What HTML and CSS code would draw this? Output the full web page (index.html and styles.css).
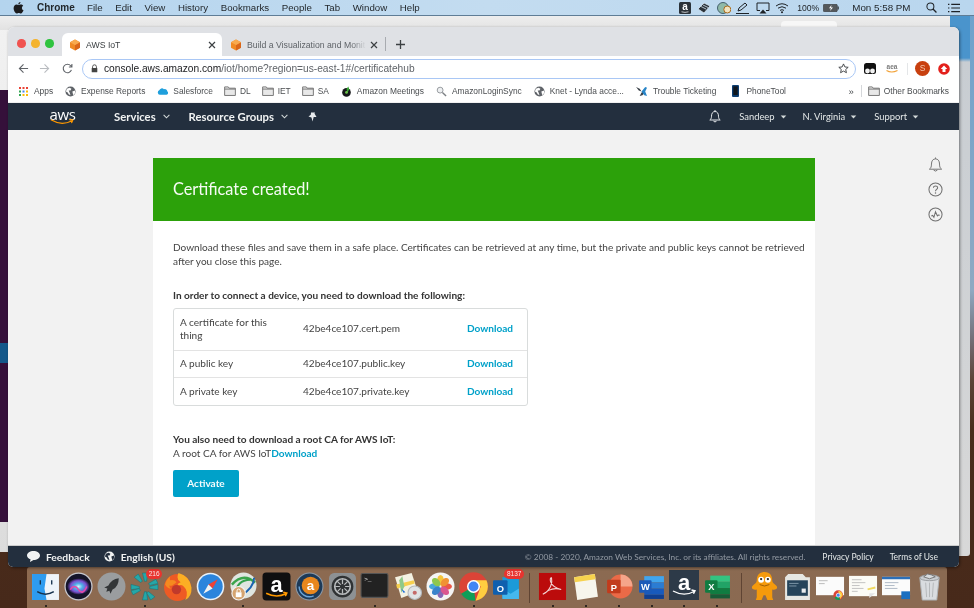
FILE: index.html
```html
<!DOCTYPE html>
<html lang="en">
<head>
<meta charset="utf-8">
<title>AWS IoT</title>
<link rel="stylesheet" href="styles.css">
</head>
<body>
<svg class="defs" width="0" height="0" aria-hidden="true">
  <symbol id="globe" viewBox="0 0 12 12"><circle cx="6" cy="6" r="5.5" fill="#5f6368"/><path d="M2 3l3-1 2 1-1 2-2 0 1 2 1 3-2-1-1-2-2-1zM8 6l3-1 0 3-2 2z" fill="#fff"/></symbol>
  <symbol id="folder" viewBox="0 0 13 11"><path d="M.6 10.4V1h4l1 1.4h6.8v8z" fill="#e8e8e8" stroke="#6e6e6e" stroke-width="1"/><path d="M.6 3.4h11.8" stroke="#6e6e6e"/></symbol>
  <symbol id="caret" viewBox="0 0 8 5"><path d="M.5.5h7L4 4.5z" fill="currentColor"/></symbol>
  <symbol id="closex" viewBox="0 0 8 8"><path d="M1 1l6 6M7 1L1 7" stroke="#3c4043" stroke-width="1.200"/></symbol>
</svg>

<div class="desktop">
  <header class="menubar">
    <svg class="apple" viewBox="0 0 12 14"><path d="M8.3 0c.1 1.300-1 2.800-2.500 2.800C5.600 1.500 6.900.2 8.300 0zM6 3.600c.7 0 1.500-.7 2.900-.7 1 0 2 .5 2.600 1.400-2.200 1.300-1.900 4.400.4 5.300-.6 1.500-1.800 3.800-3.200 3.800-.9 0-1.300-.6-2.400-.6s-1.500.6-2.400.6C2.200 13.400.3 10 .3 7.400c0-2.700 1.700-4.400 3.400-4.400 1 0 1.700.6 2.300.6z" fill="#1c1c1e"/></svg>
    <b class="m-app">Chrome</b>
    <span class="m-item">File</span><span class="m-item">Edit</span><span class="m-item">View</span><span class="m-item">History</span><span class="m-item">Bookmarks</span><span class="m-item">People</span><span class="m-item">Tab</span><span class="m-item">Window</span><span class="m-item">Help</span>
    <span class="m-fill"></span>
    <svg class="tray" viewBox="0 0 14 14"><rect x="1" y="1" width="12" height="12" rx="1.500" fill="#2a3138"/><text x="7" y="9.300" class="tray-a">a</text><path d="M3.500 10.800q3.500 1.200 7 0" stroke="#fff" stroke-width=".7" fill="none"/></svg>
    <svg class="tray" viewBox="0 0 14 14"><path d="M1 8l6-6 6 3-6 7zM4 5.500l5 2.500M6 4l5 2.500" fill="#2a3138" stroke="#d5e6f3" stroke-width=".8"/></svg>
    <svg class="tray" viewBox="0 0 14 14"><circle cx="6" cy="7" r="5.500" fill="#8fb9a8" stroke="#44606e"/><circle cx="10.300" cy="8.500" r="3.500" fill="#f3e3c0" stroke="#a86a1a"/></svg>
    <svg class="tray" viewBox="0 0 14 14"><path d="M2 10l1-3 6-5 2 2-6 5zM0 12.500h13" fill="none" stroke="#1e2226" stroke-width="1"/></svg>
    <svg class="tray" viewBox="0 0 14 14"><path d="M4 9.500H1V2h12v7.500h-3" fill="none" stroke="#1e2226"/><path d="M3.500 12.500L7 8.500l3.500 4z" fill="#1e2226"/></svg>
    <svg class="tray" viewBox="0 0 14 14"><path d="M1 5q6-4.500 12 0M3 7.200q4-3 8 0M5 9.400q2-1.400 4 0" fill="none" stroke="#1e2226"/><circle cx="7" cy="11.300" r="1" fill="#1e2226"/></svg>
    <span class="m-pct">100%</span>
    <svg class="battery" viewBox="0 0 16 8"><rect x=".3" y=".3" width="14" height="7.400" rx="1.200" fill="#55595c" stroke="#33373a" stroke-width=".6"/><rect x="14.600" y="2.500" width="1.200" height="3" fill="#33373a"/><path d="M8.500 1L6 4.300h2L7 7l3-3.500H8z" fill="#fff"/></svg>
    <span class="m-clock">Mon 5:58 PM</span>
    <svg class="m-search" viewBox="0 0 12 12"><circle cx="4.800" cy="4.800" r="3.800" fill="none" stroke="#1e2226" stroke-width="1.100"/><path d="M7.600 7.600l3.800 3.800" stroke="#1e2226" stroke-width="1.400"/></svg>
    <svg class="m-list" viewBox="0 0 13 10"><path d="M0 1h1.500M0 5h1.500M0 9h1.500M3.500 1H13M3.500 5H13M3.500 9H13" stroke="#1e2226" stroke-width="1.300"/></svg>
  </header>

  <div class="wall-left"><div class="wall-left-dark"><div class="wall-left-blue"></div></div></div>
  <div class="back-window"><i class="back-tab"></i></div>
  <div class="back-window-2"></div>

  <main class="window">
    <div class="tabstrip">
      <div class="lights"><i class="light red"></i><i class="light yellow"></i><i class="light green"></i></div>
      <div class="tab tab-active">
        <svg class="cube" viewBox="0 0 12 12"><path d="M6 .5l5 2.700v5.600l-5 2.700-5-2.700V3.200z" fill="#f08a24"/><path d="M6 6l5-2.800v5.600l-5 2.700z" fill="#d9661a"/><path d="M6 .5l5 2.700L6 6 1 3.200z" fill="#f8a94e"/></svg>
        <span class="tab-title">AWS IoT</span>
        <svg class="tab-x"><use href="#closex"/></svg>
      </div>
      <div class="tab tab-idle">
        <svg class="cube" viewBox="0 0 12 12"><path d="M6 .5l5 2.700v5.600l-5 2.700-5-2.700V3.200z" fill="#f08a24"/><path d="M6 6l5-2.800v5.600l-5 2.700z" fill="#d9661a"/><path d="M6 .5l5 2.700L6 6 1 3.200z" fill="#f8a94e"/></svg>
        <span class="tab-title fade">Build a Visualization and Monit</span>
        <svg class="tab-x"><use href="#closex"/></svg>
      </div>
      <i class="tab-sep"></i>
      <svg class="tab-plus" viewBox="0 0 9 9"><path d="M4.500 0v9M0 4.500h9" stroke="#3c4043" stroke-width="1.300"/></svg>
    </div>

    <div class="toolbar">
      <svg class="tb-icon" viewBox="0 0 12 12"><path d="M11 6H1.500M6 1.500L1.500 6 6 10.500" fill="none" stroke="#5f6368" stroke-width="1.200"/></svg>
      <svg class="tb-icon" viewBox="0 0 12 12"><path d="M1 6h9.500M6 1.500L10.500 6 6 10.500" fill="none" stroke="#b9bcc0" stroke-width="1.200"/></svg>
      <svg class="tb-icon tb-reload" viewBox="0 0 12 12"><path d="M10.300 7.500A4.600 4.600 0 1 1 9.500 3L10.800 4.300M10.800 1v3.300H7.500" fill="none" stroke="#5f6368" stroke-width="1.200"/></svg>
      <div class="omnibox">
        <svg class="lock" viewBox="0 0 8 10"><path d="M1.800 4.500V3a2.200 2.200 0 0 1 4.400 0v1.500" fill="none" stroke="#444" stroke-width="1"/><rect x=".8" y="4.300" width="6.400" height="5" rx=".7" fill="#444"/></svg>
        <span class="url"><span class="url-host">console.aws.amazon.com</span>/iot/home?region=us-east-1#/certificatehub</span>
        <span class="omni-fill"></span>
        <svg class="star" viewBox="0 0 12 12"><path d="M6 1l1.500 3.300 3.600.4-2.700 2.400.8 3.500L6 8.800l-3.200 1.800.8-3.500L.9 4.700l3.600-.4z" fill="none" stroke="#3c4043" stroke-width="1"/></svg>
      </div>
      <svg class="ext ext-tamper" viewBox="0 0 12 12"><rect width="12" height="11" rx="2.500" fill="#111"/><circle cx="3.500" cy="8" r="2.400" fill="#f1f1f1"/><circle cx="8.500" cy="8" r="2.400" fill="#f1f1f1"/></svg>
      <span class="ext ext-aws"><span class="ext-aws-t">aea</span><svg class="ext-aws-s" viewBox="0 0 12 3"><path d="M.5.500q5 3 11 0" fill="none" stroke="#f2a33a" stroke-width="1.100"/></svg></span>
      <i class="ext-sep"></i>
      <span class="avatar">S</span>
      <svg class="ext-red" viewBox="0 0 12 12"><circle cx="6" cy="6" r="5.800" fill="#e3201b"/><path d="M6 2.500L9.300 6H7.500v3h-3V6H2.700z" fill="#fff"/></svg>
    </div>

    <nav class="bookmarks">
      <span class="bm bm-apps"><svg class="bm-grid" viewBox="0 0 9 9"><g><rect width="2" height="2" fill="#e94235"/><rect x="3.500" width="2" height="2" fill="#e94235"/><rect x="7" width="2" height="2" fill="#e94235"/><rect y="3.500" width="2" height="2" fill="#34a853"/><rect x="3.500" y="3.500" width="2" height="2" fill="#4285f4"/><rect x="7" y="3.500" width="2" height="2" fill="#fbbc05"/><rect y="7" width="2" height="2" fill="#34a853"/><rect x="3.500" y="7" width="2" height="2" fill="#fbbc05"/><rect x="7" y="7" width="2" height="2" fill="#fbbc05"/></g></svg>Apps</span>
      <span class="bm bm-exp"><svg class="bm-ic"><use href="#globe"/></svg>Expense Reports</span>
      <span class="bm bm-sf"><svg class="bm-ic" viewBox="0 0 12 9"><path d="M3 8a2.500 2.500 0 0 1-.5-4.800A3 3 0 0 1 7.500 2a2.700 2.700 0 0 1 3.800 2.500A2 2 0 0 1 9.500 8z" fill="#1f9fdc"/></svg>Salesforce</span>
      <span class="bm bm-f1"><svg class="bm-fold"><use href="#folder"/></svg>DL</span>
      <span class="bm bm-f2"><svg class="bm-fold"><use href="#folder"/></svg>IET</span>
      <span class="bm bm-f3"><svg class="bm-fold"><use href="#folder"/></svg>SA</span>
      <span class="bm bm-am"><svg class="bm-ic" viewBox="0 0 12 12"><circle cx="6" cy="7" r="4.700" fill="#16181a"/><path d="M6 3l2-2.500 1 3-2 4z" fill="#38a534"/><circle cx="6" cy="7" r="1.500" fill="#6ec24a"/></svg>Amazon Meetings</span>
      <span class="bm bm-lo"><svg class="bm-ic" viewBox="0 0 12 12"><circle cx="4.500" cy="4.500" r="3.200" fill="#eef0f2" stroke="#8f9498"/><path d="M7 7l4 4" stroke="#7b7f83" stroke-width="1.500"/></svg>AmazonLoginSync</span>
      <span class="bm bm-kn"><svg class="bm-ic"><use href="#globe"/></svg>Knet - Lynda acce...</span>
      <span class="bm bm-tt"><svg class="bm-ic2" viewBox="0 0 13 12"><path d="M0 1l4 2 2 3-3-1zM4 11l2-4 2-1 1 2-2 2z" fill="#3a4148"/><path d="M6 6l4-5 2 1-2 4 2 5-3-1z" fill="#2a86c8"/></svg>Trouble Ticketing</span>
      <span class="bm bm-pt"><svg class="bm-ph" viewBox="0 0 7 12"><rect width="7" height="12" rx="1" fill="#0d3f73"/><rect x="1.300" y="1.300" width="4.400" height="8.800" fill="#10161c"/></svg>PhoneTool</span>
      <span class="bm-fill"></span>
      <span class="bm-more">»</span>
      <i class="bm-sep"></i>
      <span class="bm bm-other"><svg class="bm-fold"><use href="#folder"/></svg>Other Bookmarks</span>
    </nav>

    <nav class="awsnav">
      <span class="aws-logo"><span class="aws-word">aws</span><svg class="aws-smile" viewBox="0 0 28 7"><path d="M.5 1Q13 8.500 25 2M22 .8l4 .4-1.500 3.600" fill="none" stroke="#f90" stroke-width="1.400"/></svg></span>
      <b class="nav-main nav-services">Services</b><svg class="nav-chev" viewBox="0 0 8 5"><path d="M.7.700L4 4l3.300-3.300" fill="none" stroke="#d5dbdb" stroke-width="1.200"/></svg>
      <b class="nav-main nav-rg">Resource Groups</b><svg class="nav-chev" viewBox="0 0 8 5"><path d="M.7.700L4 4l3.300-3.300" fill="none" stroke="#d5dbdb" stroke-width="1.200"/></svg>
      <svg class="nav-pin" viewBox="0 0 9 10"><path d="M3 .5h4l-.5 1 2 3.500H5.700L4.500 9.500 3.500 5.500 .5 4.500 2.800 2.800z" fill="#e8ebed"/></svg>
      <span class="nav-fill"></span>
      <svg class="nav-bell" viewBox="0 0 12 13"><path d="M.8 10h10.400c-1.200-1-1.700-1.800-1.700-3.800 0-2.800-1.300-4.700-3.500-4.700S2.500 3.400 2.500 6.200c0 2-.5 2.800-1.700 3.800zM4.500 11.200q1.500 1.500 3 0M6 0v1.500" fill="none" stroke="#e8ebed" stroke-width="1"/></svg>
      <span class="nav-sub">Sandeep</span><svg class="nav-caret"><use href="#caret"/></svg>
      <span class="nav-sub nav-s2">N. Virginia</span><svg class="nav-caret"><use href="#caret"/></svg>
      <span class="nav-sub nav-s3">Support</span><svg class="nav-caret"><use href="#caret"/></svg>
    </nav>

    <div class="content">
      <section class="card">
        <h1 class="banner">Certificate created!</h1>
        <div class="card-body">
          <p class="intro">Download these files and save them in a safe place. Certificates can be retrieved at any time, but the private and public keys cannot be retrieved after you close this page.</p>
          <p class="lead">In order to connect a device, you need to download the following:</p>
          <div class="files">
            <div class="file-row file-row-tall"><span class="f-label">A certificate for this thing</span><span class="f-name">42be4ce107.cert.pem</span><a class="dl f-dl">Download</a></div>
            <div class="file-row"><span class="f-label">A public key</span><span class="f-name">42be4ce107.public.key</span><a class="dl f-dl">Download</a></div>
            <div class="file-row"><span class="f-label">A private key</span><span class="f-name">42be4ce107.private.key</span><a class="dl f-dl">Download</a></div>
          </div>
          <p class="lead lead-root">You also need to download a root CA for AWS IoT:</p>
          <p class="root-line">A root CA for AWS IoT<a class="dl">Download</a></p>
          <button class="activate">Activate</button>
        </div>
      </section>
      <aside class="side">
        <svg class="side-ic" viewBox="0 0 16 16"><path d="M1.500 13h13c-1.500-1-2.200-2.500-2.200-5.500C12.300 4 10.500 2 8 2S3.700 4 3.700 7.500c0 3-.7 4.500-2.200 5.500zM6 14q2 2 4 0M8 .5V2" fill="none" stroke="#6f6f6f" stroke-width="1"/></svg>
        <svg class="side-ic" viewBox="0 0 16 16"><circle cx="8" cy="8" r="7" fill="none" stroke="#6f6f6f" stroke-width="1.100"/><path d="M5.800 6.200C5.800 3.500 10.300 3.700 10.300 6.200c0 1.700-2.300 1.700-2.300 3.600" fill="none" stroke="#6f6f6f" stroke-width="1.100"/><circle cx="8" cy="11.700" r=".8" fill="#6f6f6f"/></svg>
        <svg class="side-ic" viewBox="0 0 16 16"><circle cx="8" cy="8" r="7" fill="none" stroke="#6f6f6f" stroke-width="1.100"/><path d="M3.500 9.500l1.500-.5 1.300 2L8 5l2 4.500 1-1 1.500.3" fill="none" stroke="#6f6f6f" stroke-width="1.100"/></svg>
      </aside>
    </div>

    <footer class="footer">
      <svg class="fb-ic" viewBox="0 0 13 11"><path d="M6.500 0C10 0 13 1.900 13 4.500S10 9 6.500 9L3 11l.5-2.700C1.500 7.600 0 6.200 0 4.500 0 1.900 3 0 6.500 0z" fill="#f1f3f3"/></svg>
      <b class="ft-link ft-feedback">Feedback</b>
      <svg class="ft-globe" viewBox="0 0 12 12"><circle cx="6" cy="6" r="5.500" fill="#f1f3f3"/><path d="M2 3l3-1 2 1-1 2-2 0 1 2 1 3-2-1-1-2-2-1zM8 6l3-1 0 3-2 2z" fill="#232f3e"/></svg>
      <b class="ft-link">English (US)</b>
      <span class="ft-fill"></span>
      <span class="ft-copy">© 2008 - 2020, Amazon Web Services, Inc. or its affiliates. All rights reserved.</span>
      <span class="ft-legal ft-privacy">Privacy Policy</span>
      <span class="ft-legal">Terms of Use</span>
    </footer>
  </main>

  <div class="dock">
    <div class="dock-ic"><svg viewBox="0 0 28 28"><rect x="1" y="2" width="26" height="25" fill="#eef4fa"/><path d="M1 2h14l-2 14 2 11H1z" fill="#2d9bf0"/><path d="M9 8v4M20 8v4M6 19q8 5 16 0" fill="none" stroke="#17324d" stroke-width="1.300"/></svg><i class="dot"></i></div>
    <div class="dock-ic"><svg viewBox="0 0 28 28"><defs><radialGradient id="siri"><stop offset="0" stop-color="#d8f2ff"/><stop offset=".35" stop-color="#4fb0e8"/><stop offset=".7" stop-color="#7a4fd0"/><stop offset="1" stop-color="#14142a"/></radialGradient></defs><circle cx="14" cy="14" r="13" fill="#14142a" stroke="#c9c9cf" stroke-width="1.200"/><ellipse cx="14" cy="14" rx="11" ry="8" fill="url(#siri)"/><path d="M6 17q4-6 8 0t8-3" fill="none" stroke="#e84aa8" stroke-width="1.500"/></svg></div>
    <div class="dock-ic"><svg viewBox="0 0 28 28"><circle cx="14" cy="14" r="13.500" fill="#9a9d9f"/><path d="M21 6q-7 1-10 7l-4 2 3 1-1 3 3-1 1 3 2-4q6-3 6-11z" fill="#333638"/></svg></div>
    <div class="dock-ic"><svg viewBox="0 0 28 28"><g fill="#25a7a8" stroke="#10737a" stroke-width=".5"><path d="M12 1h5l-1 8h-2z"/><path d="M12 27h5l-1-8h-2z"/><path d="M1 12v5l8-1v-2z"/><path d="M27 12v5l-8-1v-2z"/><path d="M4 5l4-3 4 7-2 1z"/><path d="M24 24l-4 3-4-7 2-1z"/><path d="M3 22l-2-4 8-2 1 2z"/><path d="M25 7l2 4-8 2-1-2z"/></g></svg><span class="badge badge-a">216</span><i class="dot"></i></div>
    <div class="dock-ic"><svg viewBox="0 0 28 28"><circle cx="14" cy="15" r="13" fill="#ee5a24"/><path d="M15 1q11 3 12.500 14 .5 9-6 12 4-8-1.500-13-2-2-6-1 0-2 3-3-3-2-3-5 0-2 1-4z" fill="#fcae24"/><path d="M2 12q1-5 5-8-1 3 0 4 4-1 6 2-2 2-3 2-1 2-4 1 0 2 2 3-4 0-6-4z" fill="#f58a1f"/><circle cx="13" cy="17" r="4.500" fill="#c0392b"/></svg></div>
    <div class="dock-ic"><svg viewBox="0 0 28 28"><circle cx="14" cy="14" r="13.300" fill="#e8f2fb"/><circle cx="14" cy="14" r="11.800" fill="#2b84dc"/><path d="M21 7l-9 5 4 4z" fill="#ef4135"/><path d="M7 21l9-5-4-4z" fill="#f2f2f2"/></svg></div>
    <div class="dock-ic"><svg viewBox="0 0 30 30"><circle cx="15" cy="14" r="13.500" fill="#dfe5e0"/><path d="M3 13Q15 0 27 11" fill="none" stroke="#3aa44b" stroke-width="2.600"/><path d="M6 24Q8 8 22 8" fill="none" stroke="#33a14c" stroke-width="2"/><path d="M12 25Q26 16 26 6" fill="none" stroke="#1a63b0" stroke-width="2"/><circle cx="10" cy="22" r="7" fill="#d5a470" stroke="#f2f2f2" stroke-width="1.200"/><rect x="7" y="21" width="6" height="5" fill="#fff"/><path d="M8.300 21v-1.600a1.700 1.700 0 0 1 3.400 0V21" fill="none" stroke="#fff"/></svg><i class="dot"></i></div>
    <div class="dock-ic"><svg viewBox="0 0 28 28"><rect x=".5" y=".5" width="27" height="27" rx="3.500" fill="#0f0f10"/><text x="14" y="19" class="amz-a">a</text><path d="M4 20.500q10 5 19 .5M20.500 19.500l3.500.8-1.500 3" fill="none" stroke="#f90" stroke-width="1.400"/></svg></div>
    <div class="dock-ic"><svg viewBox="0 0 28 28"><circle cx="14" cy="14" r="13" fill="#1d3a58" stroke="#8c9aa8"/><circle cx="15" cy="13" r="8.500" fill="#e8871e"/><text x="15" y="17.500" class="amz-b">a</text><path d="M4 14a10 10 0 0 0 14 9" fill="none" stroke="#6ba4d8" stroke-width="1.400"/></svg></div>
    <div class="dock-ic"><svg viewBox="0 0 28 28"><rect x="1" y="1" width="26" height="26" rx="5" fill="#8d9194"/><circle cx="14" cy="14" r="10.500" fill="#2f3234"/><circle cx="14" cy="14" r="7.500" fill="none" stroke="#b9bcbe" stroke-width="1.600"/><path d="M14 7v14M7 14h14M9 9l10 10M19 9L9 19" stroke="#b9bcbe" stroke-width="1.200"/><circle cx="14" cy="14" r="2.500" fill="#2f3234"/></svg></div>
    <div class="dock-ic"><svg viewBox="0 0 28 28"><rect x="1" y="1.500" width="26" height="23" rx="1.500" fill="#222" stroke="#555"/><text x="4" y="9" class="term">&gt;_</text></svg><i class="dot"></i></div>
    <div class="dock-ic"><svg viewBox="0 0 28 28"><path d="M2 5l16-4 6 18-16 6z" fill="#f4f1e2"/><path d="M3 12l17-4 1 3-17 5z" fill="#f6cf4f"/><path d="M9 4l2 10-3 6-2-12z" fill="#8fc98a"/><circle cx="21" cy="20" r="6.500" fill="#dfe3e6" stroke="#b3b9be"/><circle cx="21" cy="20" r="2" fill="#c46a6a"/><path d="M8 16l2 4 2-.5z" fill="#1e6ed6"/></svg></div>
    <div class="dock-ic"><svg viewBox="0 0 28 28"><circle cx="14" cy="14" r="13.500" fill="#f4f4f4"/><g opacity=".92"><ellipse cx="14" cy="8" rx="3.200" ry="5" fill="#f5c02c"/><ellipse cx="14" cy="20" rx="3.200" ry="5" fill="#7c5bb0"/><ellipse cx="8" cy="14" rx="5" ry="3.200" fill="#3aa0d8"/><ellipse cx="20" cy="14" rx="5" ry="3.200" fill="#ec4a38"/><ellipse cx="9.800" cy="9.800" rx="4.800" ry="3.200" transform="rotate(45 9.800 9.800)" fill="#86c440"/><ellipse cx="18.200" cy="9.800" rx="4.800" ry="3.200" transform="rotate(-45 18.200 9.800)" fill="#f08a24"/><ellipse cx="9.800" cy="18.200" rx="4.800" ry="3.200" transform="rotate(-45 9.800 18.200)" fill="#2a79c8"/><ellipse cx="18.200" cy="18.200" rx="4.800" ry="3.200" transform="rotate(45 18.200 18.200)" fill="#d84a88"/></g></svg></div>
    <div class="dock-ic"><svg viewBox="0 0 28 28"><circle cx="14" cy="14" r="13.800" fill="#db4437"/><path d="M14 14L2 21A13.800 13.800 0 0 0 16 27.700z" fill="#0f9d58"/><path d="M14 8h12.500A13.800 13.800 0 0 1 16 27.700L21 14z" fill="#ffcd40"/><circle cx="14" cy="14" r="6.300" fill="#fff"/><circle cx="14" cy="14" r="4.800" fill="#4285f4"/></svg><i class="dot"></i></div>
    <div class="dock-ic"><svg viewBox="0 0 28 28"><path d="M10 5h16v20H10z" fill="#1b9ad8"/><path d="M10 16l8 5 8-5v10H10z" fill="#45b8ee"/><rect x="1" y="8" width="14" height="14" rx="1" fill="#0f5fae"/><text x="8" y="19" class="ol">O</text></svg><span class="badge badge-b">8137</span></div>
    <i class="dock-sep dock-sep-a"></i>
    <div class="dock-ic"><svg viewBox="0 0 30 30"><rect x="1" y="1" width="28" height="28" fill="#bb0b0b"/><path d="M5 23q5-2 8-8 2-5 1-9-2 0-1 4 2 6 11 8-7-2-13 1-3 2-6 4z" fill="none" stroke="#f3d6d6" stroke-width="1.100"/></svg><i class="dot"></i></div>
    <div class="dock-ic"><svg viewBox="0 0 28 28"><path d="M3 5L23 2l3 22-20 3z" fill="#f7f5ec"/><path d="M3 5L23 2l.7 5L3.700 10z" fill="#f7d24e"/></svg><i class="dot"></i></div>
    <div class="dock-ic"><svg viewBox="0 0 28 28"><circle cx="16" cy="14" r="11.500" fill="#ea6a47"/><path d="M16 2.500A11.500 11.500 0 0 1 27.500 14H16z" fill="#f5a58a"/><rect x="3" y="7.500" width="13" height="13" rx="1" fill="#c23b1c"/><text x="9.500" y="18" class="ol">P</text></svg><i class="dot"></i></div>
    <div class="dock-ic"><svg viewBox="0 0 28 28"><rect x="7" y="4" width="19" height="6" fill="#41a5ee"/><rect x="7" y="10" width="19" height="6" fill="#2b7cd3"/><rect x="7" y="16" width="19" height="6" fill="#185abd"/><rect x="7" y="22" width="19" height="4" fill="#103f91"/><rect x="2" y="8" width="12" height="12" rx="1" fill="#1c5ab8"/><text x="8" y="17.500" class="ol">W</text></svg><i class="dot"></i></div>
    <div class="dock-ic dock-amz"><svg viewBox="0 0 30 30"><rect width="30" height="30" fill="#2d3a48"/><text x="15" y="20" class="amz-c">a</text><path d="M4 21q11 6 21 .5M22.500 20l3.500.8-1.500 3" fill="none" stroke="#fff" stroke-width="1.400"/></svg><i class="dot"></i></div>
    <div class="dock-ic"><svg viewBox="0 0 28 28"><rect x="7" y="3.500" width="19" height="6" fill="#33c481"/><rect x="7" y="9.500" width="19" height="6" fill="#21a366"/><rect x="7" y="15.500" width="19" height="6" fill="#107c41"/><rect x="7" y="21.500" width="19" height="4" fill="#185c37"/><rect x="2" y="8" width="12" height="12" rx="1" fill="#107c41"/><text x="8" y="17.500" class="ol">X</text></svg><i class="dot"></i></div>
    <i class="dock-sep dock-sep-b"></i>
    <div class="dock-ic"><svg viewBox="0 0 28 30"><path d="M14 0c6 0 8 4 8 9 0 2 2 3 4 5 3 3-1 5-4 4v8l1 3h-6l-2-5h-2l-2 5H5l1-3v-8c-3 1-7-1-4-4 2-2 4-3 4-5 0-5 2-9 8-9z" fill="#f59a0c"/><circle cx="10.500" cy="8" r="3" fill="#fff"/><circle cx="17.500" cy="8" r="3" fill="#fff"/><circle cx="10.500" cy="7.300" r="1.200" fill="#222"/><circle cx="17.500" cy="7.300" r="1.200" fill="#222"/><path d="M9 13q5 3 10 0" fill="none" stroke="#9b5c03"/></svg></div>
    <div class="dock-ic"><svg viewBox="0 0 28 28"><path d="M2 5l3-3h14l3 3h4v22H2z" fill="#e6e7e3"/><rect x="4" y="8" width="20" height="15" fill="#25445a"/><rect x="18" y="16" width="4" height="4" fill="#e8ecee"/><path d="M6 11h9M6 13.500h7" stroke="#8ea5b5" stroke-width=".8"/></svg></div>
    <div class="dock-ic"><svg viewBox="0 0 30 30"><rect y="5" width="29" height="19" fill="#fbfbfb"/><path d="M3 9h9M3 12h6" stroke="#aaa" stroke-width=".8"/><circle cx="23" cy="24" r="5" fill="#db4437"/><path d="M19 26.500a5 5 0 0 0 6 2.200L23 24z" fill="#0f9d58"/><path d="M23 19.500a5 5 0 0 1 4.500 5L25 28z" fill="#ffcd40"/><circle cx="23" cy="24" r="2" fill="#4285f4" stroke="#fff" stroke-width=".7"/></svg></div>
    <div class="dock-ic"><svg viewBox="0 0 30 30"><rect y="4" width="29" height="21" fill="#fbfbf6"/><path d="M3 8h10M3 11h14M3 14h8M3 17h12M3 20h6" stroke="#b4b4b4" stroke-width=".8"/><path d="M19 17l8-2 .5 2-8 2z" fill="#f1d95e"/><path d="M21 27l6-5h-6z" fill="#e3e3e3"/></svg></div>
    <div class="dock-ic"><svg viewBox="0 0 30 30"><rect y="5" width="29" height="19" fill="#fbfbfb"/><rect y="5" width="29" height="2.500" fill="#2b6fb8"/><path d="M3 11h14M3 14h10M3 17h13" stroke="#9aa7b8" stroke-width=".8"/><rect x="20" y="20" width="9" height="8" fill="#1b6fc0"/></svg></div>
    <div class="dock-ic"><svg viewBox="0 0 28 30"><path d="M4 6h20l-2.500 23h-15z" fill="#d9dcdf" stroke="#aeb2b5"/><ellipse cx="14" cy="6" rx="10" ry="3" fill="#c9cccf" stroke="#9a9ea1"/><path d="M8 5l4-3 4 1 4 2-6 2z" fill="#d8dbdd" stroke="#777"/><path d="M10 11l1 15M14 11v15M18 11l-1 15" stroke="#b4b7ba"/></svg></div>
  </div>
</div>
</body>
</html>
```

FILE: styles.css
```css
* { box-sizing: border-box; }
html, body { margin: 0; padding: 0; }
body { width: 974px; height: 608px; overflow: hidden; font-family: "Liberation Sans", Arial, sans-serif; }
.defs { position: absolute; }
svg { display: block; flex: none; }
i { display: block; }

.desktop {
  position: relative; width: 974px; height: 608px; overflow: hidden; filter: blur(.5px);
  background: linear-gradient(180deg, #6da2cd 0, #8fa9c2 290px, #6e6266 350px, #5d4436 380px, #4a2d1c 430px, #47291a 608px);
}

/* menu bar */
.menubar {
  position: relative; z-index: 3; height: 16px; display: flex; align-items: center; font-size: 9.700px; color: #23282c;
  background: linear-gradient(90deg, #b4d4ee, #c3dcf0 50%, #b9d6ee); border-bottom: 1px solid #5f7d96;
}
.apple { width: 11px; height: 12px; margin-left: 13px; }
.m-app { margin-left: 13px; width: 37px; font-size: 10px; white-space: nowrap; }
.m-item { margin-left: 12.600px; }
.m-item:first-of-type { margin-left: 13px; }
.m-fill { flex: 1; }
.tray { width: 14px; height: 14px; margin-right: 5.500px; }
.tray-a { font: bold 10px "Liberation Sans", sans-serif; fill: #fff; text-anchor: middle; }
.m-pct { margin-left: 2.500px; font-size: 8.600px; }
.battery { width: 16px; height: 8px; margin-left: 4px; }
.m-clock { margin-left: 13px; font-size: 9.800px; }
.m-search { width: 11px; height: 11px; margin-left: 15px; }
.m-list { width: 12px; height: 10px; margin: 0 14.500px 0 11px; }

/* what sits behind the front window */
.wall-left { position: absolute; left: 0; top: 16px; width: 9px; height: 536px; background: linear-gradient(180deg, #f2f2f2, #dcdcdc); padding-top: 74px; }
.wall-left-dark { height: 432px; background: #35103a; padding-top: 253px; }
.wall-left-blue { height: 20px; background: #14588a; }
.back-window { position: absolute; left: 0; top: 16px; width: 970px; height: 14px; background: linear-gradient(180deg, #eeeeee, #e2e2e2); }
.back-tab { width: 56px; height: 9px; margin: 5px 0 0 781px; background: #f7f7f7; border-radius: 4px 4px 0 0; }
.back-window-2 { position: absolute; left: 950px; top: 16px; width: 20px; height: 540px; background: linear-gradient(180deg, #4a94cc 0, #4a94cc 42px, #c8cdd2 46px, #d8d8d8 100%); border-radius: 0 0 3px 3px; }

/* front window */
.window { position: absolute; z-index: 2; left: 8px; top: 27px; width: 951px; height: 540px; display: flex; flex-direction: column; overflow: hidden; border-radius: 6px 6px 5px 5px; background: #fff; box-shadow: 1px 1px 3px rgba(0,0,0,.45); }
.tabstrip { height: 29px; flex: none; display: flex; align-items: flex-end; background: #dfe1e5; }
.lights { display: flex; gap: 5.500px; align-self: flex-start; margin: 12px 0 0 9px; }
.light { width: 8.500px; height: 8.500px; border-radius: 50%; }
.red { background: #f0524f; } .yellow { background: #f4b32e; } .green { background: #2fc33f; }
.tab { height: 23px; width: 160px; display: flex; align-items: center; font-size: 8.700px; color: #3c4043; }
.tab-active { margin-left: 8.500px; padding: 0 6px 0 7px; background: #fff; border-radius: 6px 6px 0 0; }
.tab-idle { padding: 0 4px 0 8px; color: #5f6368; }
.cube { width: 12px; height: 12px; margin-right: 5px; }
.tab-title { flex: 1; white-space: nowrap; overflow: hidden; }
.fade { -webkit-mask-image: linear-gradient(90deg, #000 88%, transparent); mask-image: linear-gradient(90deg, #000 88%, transparent); }
.tab-x { width: 8px; height: 8px; margin-left: 4px; }
.tab-sep { width: 1px; height: 14px; margin: 0 0 5px 3px; background: #a8abb0; }
.tab-plus { width: 9px; height: 9px; margin: 0 0 7.500px 10px; }

.toolbar { height: 25px; flex: none; display: flex; align-items: center; background: #fff; }
.tb-icon { width: 11px; height: 11px; margin-left: 10px; }
.tb-reload { margin-left: 12px; }
.omnibox { width: 774px; height: 20px; margin-left: 9px; padding: 0 6.500px 0 7.500px; display: flex; align-items: center; border: 1.500px solid #a9c7f5; border-radius: 10px; font-size: 10.200px; color: #5f6368; }
.lock { width: 7px; height: 9px; margin-right: 6.500px; }
.url { white-space: nowrap; }
.url-host { color: #202124; }
.omni-fill { flex: 1; }
.star { width: 11px; height: 11px; }
.ext { flex: none; }
.ext-tamper { width: 12px; height: 12px; margin-left: 8px; }
.ext-aws { width: 12px; margin-left: 10px; display: block; }
.ext-aws-t { display: block; font-size: 6.500px; line-height: 6px; color: #7b7b7b; text-align: center; font-weight: bold; }
.ext-aws-s { width: 12px; height: 3px; }
.ext-sep { width: 1px; height: 12px; margin-left: 9px; background: #e4e6e8; }
.avatar { width: 15px; height: 15px; margin-left: 7px; flex: none; border-radius: 50%; background: #c8400f; color: #f4c8b0; font-size: 8.500px; line-height: 15px; text-align: center; }
.ext-red { width: 12px; height: 12px; margin-left: 8px; }

.bookmarks { height: 22px; flex: none; display: flex; align-items: center; padding-bottom: 1px; background: #fff; font-size: 8.400px; color: #4a4d50; border-bottom: 1px solid #f0f0f0; }
.bm { display: flex; align-items: center; white-space: nowrap; }
.bm-grid { width: 9px; height: 9px; margin-right: 6px; }
.bm-ic { width: 11px; height: 11px; margin-right: 5px; }
.bm-ic2 { width: 12px; height: 11px; margin-right: 5px; }
.bm-fold { width: 12px; height: 10px; margin-right: 4px; }
.bm-ph { width: 7px; height: 12px; margin-right: 7px; }
.bm-apps { margin-left: 11px; }
.bm-exp, .bm-sf { margin-left: 12px; }
.bm-f1, .bm-f2, .bm-f3 { margin-left: 11px; }
.bm-am, .bm-lo, .bm-kn, .bm-tt { margin-left: 12px; }
.bm-pt { margin-left: 16px; }
.bm-fill { flex: 1; }
.bm-more { font-size: 9.500px; }
.bm-sep { width: 1px; height: 12px; margin: 0 6px 0 7px; background: #d5d7da; }
.bm-other { margin-right: 10px; }

.awsnav { height: 27px; flex: none; display: flex; align-items: center; background: #232f3e; color: #f1f3f3; }
.aws-logo { display: block; width: 27px; margin-left: 41px; }
.aws-word { display: block; font: 500 15px/10px "Open Sans", sans-serif; letter-spacing: -.3px; color: #fff; text-align: center; }
.aws-smile { width: 27px; height: 6px; }
.nav-main { font: 700 11.300px "Lato", sans-serif; }
.nav-services { margin-left: 38px; }
.nav-rg { margin-left: 19px; }
.nav-chev { width: 7px; height: 5px; margin-left: 7px; }
.nav-pin { width: 9px; height: 10px; margin-left: 20px; }
.nav-fill { flex: 1; }
.nav-bell { width: 12px; height: 13px; margin-right: 18px; }
.nav-sub { font: 9.400px "Lato", sans-serif; color: #e4e8e8; }
.nav-s2 { margin-left: 16px; }
.nav-s3 { margin-left: 17px; }
.nav-caret { width: 7px; height: 4px; margin-left: 5px; color: #d5dbdb; }
.nav-caret:last-child { margin-right: 40px; }

.content { flex: 1; display: flex; align-items: stretch; padding-left: 145px; background: #f2f2f2; }
.card { width: 662px; margin-top: 28px; background: #fff; display: flex; flex-direction: column; }
.banner { margin: 0; height: 63px; flex: none; padding: 0 0 2px 20px; display: flex; align-items: center; background: #2ca10a; color: #f6fbf4; font: 400 16.300px "Lato", sans-serif; }
.card-body { flex: 1; padding: 20px 10px 0 20px; font: 10.050px/13.500px "Lato", sans-serif; color: #444; }
.intro { margin: 0; }
.lead { margin: 21px 0 0; font-weight: 700; color: #333; }
.files { width: 355px; margin-top: 5px; border: 1px solid #d9dcdc; border-radius: 3px; }
.file-row { height: 27.500px; display: flex; align-items: center; padding-left: 6px; border-top: 1px solid #e3e3e3; }
.file-row:first-child { border-top: 0; }
.file-row-tall { height: 41px; }
.f-label { width: 123px; padding-right: 35px; }
.f-name { width: 164px; }
.dl { color: #00a1c9; font-weight: 700; }
.lead-root { margin-top: 27px; }
.root-line { margin: 1px 0 0; }
.activate { display: block; width: 66px; height: 27px; margin-top: 9px; padding: 0; border: 0; border-radius: 2px; background: #00a1c9; color: #f2fbfd; font: 700 10.050px "Lato", sans-serif; }
.side { margin-left: 113px; padding-top: 27px; display: flex; flex-direction: column; gap: 10px; }
.side-ic { width: 15px; height: 15px; }

.footer { height: 22px; flex: none; display: flex; align-items: center; background: #232f3e; color: #f1f3f3; border-top: 1px solid #ccc; }
.fb-ic { width: 13px; height: 11px; margin-left: 19px; }
.ft-link { font: 700 10.300px "Lato", sans-serif; }
.ft-feedback { margin-left: 6px; }
.ft-globe { width: 11px; height: 11px; margin: 0 6px 0 14px; }
.ft-fill { flex: 1; }
.ft-copy { font: 8.300px "Lato", sans-serif; color: #939aa3; }
.ft-legal { font: 8.500px "Lato", sans-serif; color: #e4e8e8; }
.ft-privacy { margin: 0 16px 0 17px; }
.ft-legal:last-child { margin-right: 21px; }

/* dock */
.dock { position: absolute; z-index: 1; left: 27px; top: 567px; width: 920px; height: 41px; padding: 4px 0 0 2.550px; display: flex; background: linear-gradient(90deg, #8d6a50, #8a6a52); border-radius: 3px 3px 0 0; }
.dock-ic { position: relative; width: 32.900px; height: 36px; flex: none; }
.dock-ic > svg { width: 29px; height: 29px; margin: 1px auto 0; }
.dock-amz > svg { width: 30px; height: 30px; margin-top: -1px; }
.dot { position: absolute; left: 15.500px; bottom: 0; width: 2px; height: 2px; border-radius: 50%; background: #111; }
.badge { position: absolute; top: -2px; right: -1px; height: 10px; padding: 0 2.500px; border-radius: 5px; background: #e8342f; color: #fbe6e4; font-size: 6.500px; line-height: 10px; }
.dock-sep { width: 1px; height: 30px; flex: none; margin-top: 2px; background: #5f4433; }
.dock-sep-a { margin-left: 6px; margin-right: 6.500px; }
.dock-sep-b { margin-left: 7px; margin-right: 6.500px; }
.amz-a { font: 700 21px "Liberation Sans", sans-serif; fill: #fff; text-anchor: middle; }
.amz-b { font: 700 13px "Liberation Sans", sans-serif; fill: #fff; text-anchor: middle; }
.amz-c { font: 700 22px "Liberation Sans", sans-serif; fill: #fff; text-anchor: middle; }
.term { font: 6px "Liberation Mono", monospace; fill: #eee; }
.ol { font: 700 9px "Liberation Sans", sans-serif; fill: #fff; text-anchor: middle; }
```
